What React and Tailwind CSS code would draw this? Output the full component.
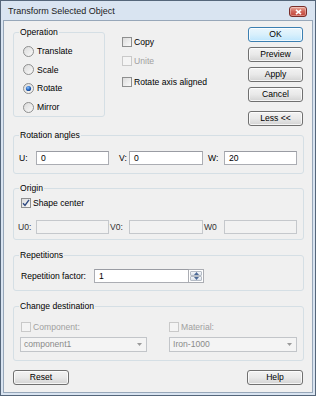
import React from "react";

function Group({ label, className = "", children }) {
  return (
    <div className={`relative rounded-[3px] border border-[#d5dfe5] ${className}`}>
      <span className="absolute left-[5px] top-[-7px] bg-[#f0f0f0] px-[1px] text-[8.6px] leading-[12px] text-black">
        {label}
      </span>
      {children}
    </div>
  );
}

function Btn({ children, def = false, className = "" }) {
  return (
    <div
      className={`flex h-[15px] w-[55px] items-center justify-center rounded-[3px] border text-[8.6px] leading-none text-black shadow-[inset_0_0_0_1px_rgba(255,255,255,0.75)] ${
        def
          ? "border-[#3c7fb1] bg-linear-to-b from-[#eaf6fd] via-[#d9f0fc] to-[#bee6fd]"
          : "border-[#707070] bg-linear-to-b from-[#f3f3f3] via-[#e9e9e9] to-[#d3d3d3]"
      } ${className}`}
    >
      {children}
    </div>
  );
}

function Radio({ label, checked = false }) {
  return (
    <div className="flex h-[18.6px] items-center pl-[9px]">
      <svg width="11" height="11" viewBox="0 0 11 11" className="shrink-0">
        <defs>
          <linearGradient id={`rg${label}`} x1="0" y1="0" x2="1" y2="1">
            <stop offset="0" stopColor="#d9d9d9" />
            <stop offset="1" stopColor="#fbfbfb" />
          </linearGradient>
          <radialGradient id={`rd${label}`} cx="0.4" cy="0.35" r="0.7">
            <stop offset="0" stopColor="#8fc3ff" />
            <stop offset="0.6" stopColor="#2466c0" />
            <stop offset="1" stopColor="#1a3f80" />
          </radialGradient>
        </defs>
        <circle cx="5.5" cy="5.5" r="5" fill={`url(#rg${label})`} stroke="#8e8f8f" strokeWidth="1" />
        {checked && <circle cx="5.5" cy="5.5" r="2.6" fill={`url(#rd${label})`} />}
      </svg>
      <span className="ml-[3px] text-[8.6px] leading-[12px] text-black">{label}</span>
    </div>
  );
}

function Check({ label, checked = false, disabled = false, className = "" }) {
  return (
    <div className={`flex h-[14px] items-center ${className}`}>
      <div
        className={`relative h-[10px] w-[10px] shrink-0 border ${
          disabled
            ? "border-[#c9c9c9] bg-[#f4f4f4]"
            : "border-[#8e8f8f] bg-linear-to-br from-[#dcdcdc] to-[#fafafa]"
        }`}
      >
        {checked && (
          <svg width="8" height="8" viewBox="0 0 8 8" className="absolute left-0 top-0">
            <path d="M1 4.2 L3 6.4 L7 0.8" fill="none" stroke="#2f4a82" strokeWidth="1.4" />
          </svg>
        )}
      </div>
      <span
        className={`ml-[2px] text-[8.6px] leading-[12px] ${disabled ? "text-[#a0a0a0]" : "text-black"}`}
      >
        {label}
      </span>
    </div>
  );
}

function Field({ value = "", className = "", disabled = false }) {
  return (
    <div
      className={`flex h-[14px] items-center border pl-[4px] text-[8.6px] leading-none ${
        disabled
          ? "border-[#c5c8cc] bg-[#f2f2f2] text-[#8a8a8a]"
          : "border-[#abadb3] border-t-[#9a9ca3] bg-white text-black"
      } ${className}`}
    >
      {value}
    </div>
  );
}

function Combo({ value, className = "" }) {
  return (
    <div
      className={`flex h-[15px] items-center justify-between border border-[#c2c5c9] bg-[#f4f4f4] pl-[3px] pr-[4px] text-[8.6px] leading-none text-[#8a8a8a] ${className}`}
    >
      <span>{value}</span>
      <svg width="5" height="3" viewBox="0 0 5 3">
        <path d="M0 0 L5 0 L2.5 3 Z" fill="#9a9a9a" />
      </svg>
    </div>
  );
}

export default function App() {
  return (
    <div className="flex h-[396px] w-[316px] flex-col border border-[#55667a] bg-[#d9e4f1] px-[2px] pb-[2px] font-['Liberation_Sans',Arial,sans-serif]">
      {/* Title bar */}
      <div className="flex h-[19px] shrink-0 items-center justify-between pl-[5px]">
        <span className="text-[9px] leading-[12px] text-[#1b1b1b]">Transform Selected Object</span>
        <div className="mr-[6px] mt-[2px] flex h-[11px] w-[18px] items-center justify-center rounded-[3px] border border-[#7a2e2a] bg-linear-to-b from-[#e9a99b] via-[#d0655b] to-[#c24437] shadow-[inset_0_0_0_1px_rgba(255,255,255,0.35)]">
          <svg width="7" height="6" viewBox="0 0 7 6">
            <path d="M1 0.8 L6 5.2 M6 0.8 L1 5.2" stroke="#ffffff" strokeWidth="1.6" />
          </svg>
        </div>
      </div>

      {/* Content */}
      <div className="flex flex-1 flex-col border border-[#97a7b9] bg-[#f0f0f0] pl-[9px] pr-[8px]">
        {/* Top row */}
        <div className="flex items-start pt-[6px]">
          <Group label="Operation" className="mt-[5px] h-[85px] w-[92px] shrink-0">
            <div className="flex flex-col pt-[9px]">
              <Radio label="Translate" />
              <Radio label="Scale" />
              <Radio label="Rotate" checked />
              <Radio label="Mirror" />
            </div>
          </Group>
          <div className="ml-[17px] flex flex-col">
            <Check label="Copy" className="mt-[8px]" />
            <Check label="Unite" disabled className="mt-[5px]" />
            <Check label="Rotate axis aligned" className="mt-[7px]" />
          </div>
          <div className="ml-auto mr-[1px] flex flex-col">
            <Btn def>OK</Btn>
            <Btn className="mt-[5px]">Preview</Btn>
            <Btn className="mt-[5px]">Apply</Btn>
            <Btn className="mt-[5px]">Cancel</Btn>
            <Btn className="mt-[9px]">Less &lt;&lt;</Btn>
          </div>
        </div>

        {/* Rotation angles */}
        <Group label="Rotation angles" className="mt-[9px] h-[39px] shrink-0">
          <div className="flex items-center pl-[5px] pt-[15px] text-[8.6px] leading-[12px] text-black">
            <span className="w-[17px]">U:</span>
            <Field value="0" className="w-[73px]" />
            <span className="ml-[10px] w-[10px]">V:</span>
            <Field value="0" className="w-[74px]" />
            <span className="ml-[5px] w-[16px]">W:</span>
            <Field value="20" className="w-[73px]" />
          </div>
        </Group>

        {/* Origin */}
        <Group label="Origin" className="mt-[14px] h-[52px] shrink-0">
          <div className="pl-[7px] pt-[7px]">
            <Check label="Shape center" checked />
          </div>
          <div className="mt-[10px] flex items-center pl-[4px] text-[8.6px] leading-[12px] text-[#333]">
            <span className="w-[18px]">U0:</span>
            <Field disabled className="w-[73px]" />
            <span className="ml-[1px] w-[19px]">V0:</span>
            <Field disabled className="w-[74px]" />
            <span className="ml-[1px] w-[20px]">W0</span>
            <Field disabled className="w-[73px]" />
          </div>
        </Group>

        {/* Repetitions */}
        <Group label="Repetitions" className="mt-[15px] h-[36px] shrink-0">
          <div className="flex items-center pl-[7px] pt-[13px] text-[8.6px] leading-[12px] text-black">
            <span className="w-[73px]">Repetition factor:</span>
            <Field value="1" className="w-[95px]" />
            <div className="flex h-[14px] w-[15px] flex-col border border-l-0 border-[#abadb3] bg-white p-[1px]">
              <div className="flex flex-1 items-center justify-center rounded-[1px] border border-[#b5bcc6] bg-linear-to-b from-[#f5f7fa] to-[#dde3eb]">
                <svg width="5" height="3" viewBox="0 0 5 3">
                  <path d="M0 3 L5 3 L2.5 0 Z" fill="#4d6a96" />
                </svg>
              </div>
              <div className="flex flex-1 items-center justify-center rounded-[1px] border border-[#b5bcc6] bg-linear-to-b from-[#f5f7fa] to-[#dde3eb]">
                <svg width="5" height="3" viewBox="0 0 5 3">
                  <path d="M0 0 L5 0 L2.5 3 Z" fill="#4d6a96" />
                </svg>
              </div>
            </div>
          </div>
        </Group>

        {/* Change destination */}
        <Group label="Change destination" className="mt-[15px] h-[55px] shrink-0">
          <div className="flex pl-[6px] pt-[13px]">
            <div className="flex w-[127px] flex-col">
              <Check label="Component:" disabled className="ml-[1px]" />
              <Combo value="component1" className="mt-[3px] w-[127px]" />
            </div>
            <div className="ml-[22px] flex w-[128px] flex-col">
              <Check label="Material:" disabled />
              <Combo value="Iron-1000" className="mt-[3px] w-[128px]" />
            </div>
          </div>
        </Group>

        {/* Bottom buttons */}
        <div className="mr-[1px] mt-[9px] flex justify-between">
          <Btn className="w-[56px]">Reset</Btn>
          <Btn className="w-[56px]">Help</Btn>
        </div>
      </div>
    </div>
  );
}
